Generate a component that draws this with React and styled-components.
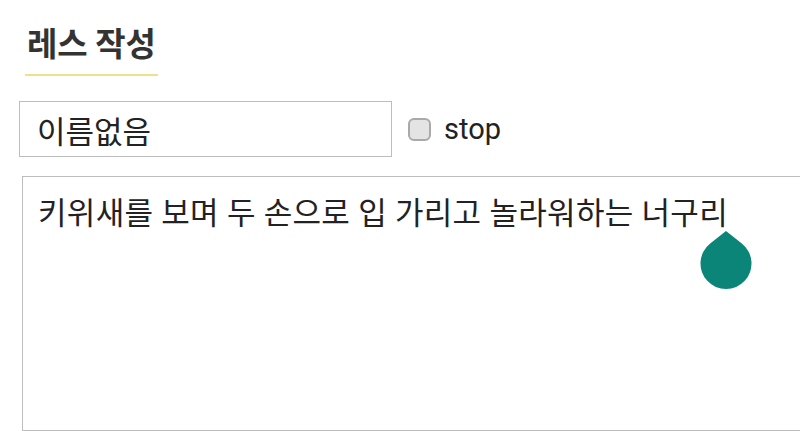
import React from "react";
import styled, { createGlobalStyle } from "styled-components";

const GlobalStyle = createGlobalStyle`
  html, body {
    margin: 0;
    padding: 0;
    background: #fff;
    overflow: hidden;
  }
  body {
    font-family: Roboto, "Noto Sans CJK KR", sans-serif;
    color: #222;
  }
`;

const Page = styled.div`
  padding: 22px 0 0 19px;
  height: 431px;
  box-sizing: border-box;
  display: flex;
  flex-direction: column;
`;

const Heading = styled.h2`
  align-self: flex-start;
  margin: 0 0 0 6px;
  padding: 0 2px 12px 2px;
  font-family: "Noto Sans CJK KR", sans-serif;
  font-size: 33px;
  font-weight: 700;
  line-height: 40px;
  color: #333;
  border-bottom: 2px solid #f1df8c;
`;

const NameRow = styled.div`
  display: flex;
  align-items: center;
  margin-top: 25px;
`;

const NameInput = styled.input`
  width: 373px;
  height: 56px;
  box-sizing: border-box;
  border: 1px solid #bdbdbd;
  border-radius: 0;
  padding: 0 0 0 17px;
  font-family: Roboto, "Noto Sans CJK KR", sans-serif;
  font-size: 31px;
  color: #222;
  outline: none;
`;

const StopLabel = styled.label`
  display: flex;
  align-items: center;
  gap: 13px;
  margin-left: 16px;
  font-family: Roboto, "Noto Sans CJK KR", sans-serif;
  font-size: 29px;
  color: #222;
`;

const Check = styled.input`
  appearance: none;
  margin: 0;
  width: 23px;
  height: 23px;
  border: 2px solid #a9a9a9;
  border-radius: 6px;
  background: #e4e4e4;
  box-sizing: border-box;
`;

const BodyWrap = styled.div`
  position: relative;
  flex: 1;
  margin: 19px 0 0 3px;
`;

const BodyArea = styled.textarea`
  display: block;
  width: calc(100% + 40px);
  height: 100%;
  box-sizing: border-box;
  border: 1px solid #bdbdbd;
  border-radius: 0;
  padding: 17px 15px;
  resize: none;
  font-family: Roboto, "Noto Sans CJK KR", sans-serif;
  font-size: 31px;
  letter-spacing: 0.3px;
  line-height: 40px;
  color: #222;
  outline: none;
`;

// android style caret handle sitting under the cursor
const Handle = styled.svg`
  position: absolute;
  left: 678px;
  top: 55px;
  width: 52px;
  height: 59px;
`;

export default function App() {
  return (
    <>
      <GlobalStyle />
      <Page>
        <Heading>레스 작성</Heading>
        <NameRow>
          <NameInput defaultValue="이름없음" />
          <StopLabel>
            <Check type="checkbox" />
            stop
          </StopLabel>
        </NameRow>
        <BodyWrap>
          <BodyArea defaultValue="키위새를 보며 두 손으로 입 가리고 놀라워하는 너구리" />
          <Handle viewBox="0 0 52 59">
            <path
              d="M26 0 L41.8 12.5 A25.5 25.5 0 1 1 10.2 12.5 Z"
              fill="#0b8577"
            />
          </Handle>
        </BodyWrap>
      </Page>
    </>
  );
}
